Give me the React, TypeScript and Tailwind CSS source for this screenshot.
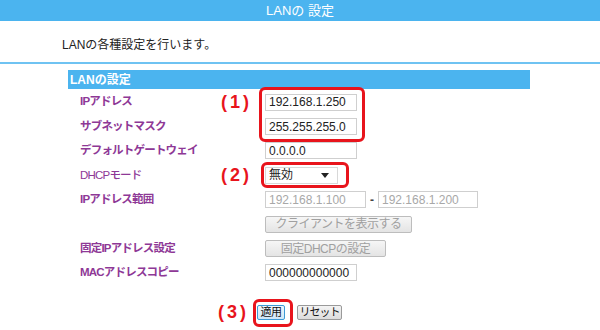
import React from "react";

const font = { fontFamily: '"Liberation Sans", "Noto Sans CJK JP", sans-serif' };

function Label({ children }: { children: React.ReactNode }) {
  return (
    <div className="w-[141px] text-[11.5px] font-bold text-[#8e3896] tracking-[-0.8px] leading-none whitespace-nowrap">
      {children}
    </div>
  );
}

function Marker({ children }: { children?: React.ReactNode }) {
  return (
    <div className="w-[44px] text-[18px] font-bold text-[#e8141c] tracking-[3px] leading-none">
      {children}
    </div>
  );
}

function TextBox({ value, w = "w-[92px]", disabled = false }: { value: string; w?: string; disabled?: boolean }) {
  return (
    <div
      className={`${w} h-[17px] border border-[#cfcfcf] bg-white flex items-center pl-[3px] text-[12px] leading-none ${
        disabled ? "text-[#a8a8a8]" : "text-[#222]"
      }`}
    >
      {value}
    </div>
  );
}

function GrayButton({ children, w }: { children: React.ReactNode; w: string }) {
  return (
    <div
      className={`${w} h-[17px] border border-[#bdbdbd] rounded-[2px] bg-gradient-to-b from-[#f6f6f6] to-[#e4e4e4] flex items-center justify-center text-[12px] text-[#a0a0a0] leading-none whitespace-nowrap tracking-[-0.5px]`}
    >
      {children}
    </div>
  );
}

export default function App() {
  return (
    <div className="w-[600px] h-[330px] bg-white overflow-hidden" style={font}>
      <div className="h-[21px] bg-[#4bb4ef] flex items-center justify-center text-white text-[13px]">
        LANの 設定
      </div>
      <div className="h-[43px] border-b-2 border-[#6fc3f2] pl-[62px] pt-[18px] text-[12px] text-[#222] leading-none">
        LANの各種設定を行います。
      </div>
      <div className="ml-[68px] w-[462px] mt-[6px] h-[19px] bg-[#4bb4ef] text-white text-[12px] font-bold flex items-center pl-[2px]">
        LANの設定
      </div>
      <div className="pl-[80px] pt-[1px] flex flex-col">
        <div className="h-[24.4px] flex items-center">
          <Label>IPアドレス</Label>
          <Marker>(1)</Marker>
          <div className="relative">
            <TextBox value="192.168.1.250" />
            <div className="absolute top-[-7px] left-[-6px] w-[106px] h-[55px] rounded-[6px] border-[3px] border-[#e8141c]" />
          </div>
        </div>
        <div className="h-[24.4px] flex items-center">
          <Label>サブネットマスク</Label>
          <Marker />
          <TextBox value="255.255.255.0" />
        </div>
        <div className="h-[24.4px] flex items-center">
          <Label>デフォルトゲートウェイ</Label>
          <Marker />
          <TextBox value="0.0.0.0" />
        </div>
        <div className="h-[24.4px] flex items-center">
          <Label>
            <span className="font-medium">DHCPモード</span>
          </Label>
          <Marker>(2)</Marker>
          <div className="relative">
            <div className="w-[73px] h-[17px] border border-[#d8d8d8] bg-white flex items-center justify-between pl-[3px] pr-[8px] text-[12px] text-[#222] leading-none">
              <span>無効</span>
              <svg width="8" height="5" viewBox="0 0 8 5">
                <path d="M0 0 L8 0 L4 5 Z" fill="#222" />
              </svg>
            </div>
            <div className="absolute top-[-5px] left-[-4px] w-[88px] h-[26px] rounded-[6px] border-[3px] border-[#e8141c]" />
          </div>
        </div>
        <div className="h-[24.4px] flex items-center">
          <Label>IPアドレス範囲</Label>
          <Marker />
          <TextBox value="192.168.1.100" w="w-[101px]" disabled />
          <div className="w-[12px] text-center text-[12px] font-bold text-[#444]">-</div>
          <TextBox value="192.168.1.200" w="w-[100px]" disabled />
        </div>
        <div className="h-[24.4px] flex items-center">
          <Label> </Label>
          <Marker />
          <GrayButton w="w-[147px]">クライアントを表示する</GrayButton>
        </div>
        <div className="h-[24.4px] flex items-center">
          <Label>固定IPアドレス設定</Label>
          <Marker />
          <GrayButton w="w-[121px]">固定DHCPの設定</GrayButton>
        </div>
        <div className="h-[24.4px] flex items-center">
          <Label>MACアドレスコピー</Label>
          <Marker />
          <TextBox value="000000000000" />
        </div>
      </div>
      <div className="mt-[18px] ml-[218px] flex items-center">
        <div className="w-[39px] text-[18px] font-bold text-[#e8141c] tracking-[3px] leading-none">(3)</div>
        <div className="relative">
          <div className="w-[28px] h-[15px] border border-[#3d9ad6] rounded-[2px] bg-gradient-to-b from-[#eef7fd] to-[#cfe7f7] flex items-center justify-center text-[11px] text-[#111] leading-none whitespace-nowrap tracking-[-0.5px]">
            適用
          </div>
          <div className="absolute top-[-6px] left-[-4px] w-[40px] h-[28px] rounded-[6px] border-[3px] border-[#e8141c]" />
        </div>
        <div className="ml-[12px] w-[45px] h-[15px] border border-[#9a9a9a] rounded-[2px] bg-gradient-to-b from-[#f4f4f4] to-[#dcdcdc] flex items-center justify-center text-[11px] text-[#111] leading-none whitespace-nowrap tracking-[-1px]">
          リセット
        </div>
      </div>
    </div>
  );
}
